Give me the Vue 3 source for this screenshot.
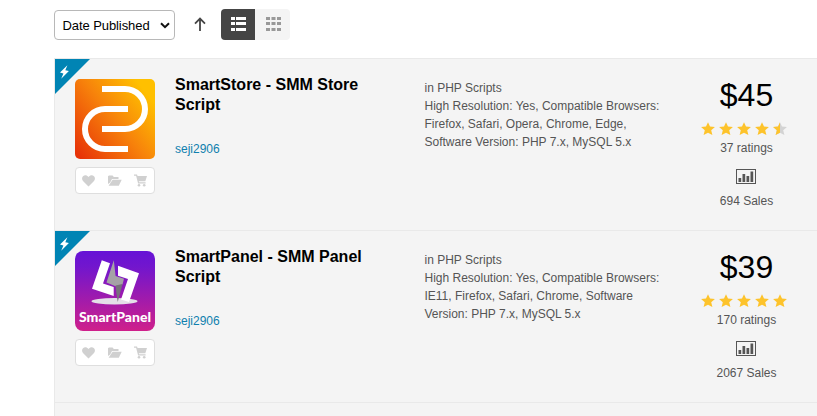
<script setup>
const items = [
  {
    logo: 'store',
    title: ['SmartStore - SMM Store', 'Script'],
    author: 'seji2906',
    meta: ['in PHP Scripts', 'High Resolution: Yes, Compatible Browsers:', 'Firefox, Safari, Opera, Chrome, Edge,', 'Software Version: PHP 7.x, MySQL 5.x'],
    price: '$45',
    stars: [1, 1, 1, 1, 0.5],
    ratings: '37 ratings',
    sales: '694 Sales',
  },
  {
    logo: 'panel',
    title: ['SmartPanel - SMM Panel', 'Script'],
    author: 'seji2906',
    meta: ['in PHP Scripts', 'High Resolution: Yes, Compatible Browsers:', 'IE11, Firefox, Safari, Chrome, Software', 'Version: PHP 7.x, MySQL 5.x'],
    price: '$39',
    stars: [1, 1, 1, 1, 1],
    ratings: '170 ratings',
    sales: '2067 Sales',
  },
]
const starPath = 'M7 0.2L9 4.6L13.9 5L10.2 8.3L11.4 13.1L7 10.7L2.6 13.1L3.8 8.3L0.1 5L5 4.6Z'
</script>

<template>
  <main class="page">
    <header class="toolbar">
      <button class="select">
        <span>Date Published</span>
        <svg width="10" height="7" viewBox="0 0 10 7"><path d="M1 1.2L5 5.2L9 1.2" fill="none" stroke="#111" stroke-width="2" /></svg>
      </button>
      <button class="sort" aria-label="Sort direction">
        <svg width="12" height="15" viewBox="0 0 12 15"><path d="M6 14V1.8M1 6.6L6 1.6L11 6.6" fill="none" stroke="#454545" stroke-width="1.8" /></svg>
      </button>
      <div class="views">
        <button class="view active" aria-label="List view">
          <svg width="15" height="14" viewBox="0 0 15 14" fill="#fff">
            <path d="M0 0h4v3H0zM5 0H15v3H5zM0 5h4v3H0zM5 5H15v3H5zM0 11h4v3H0zM5 11H15v3H5z" />
          </svg>
        </button>
        <button class="view" aria-label="Grid view">
          <svg width="15" height="14" viewBox="0 0 15 14" fill="#999">
            <path d="M0 0h4v3H0zM5.5 0h4v3h-4zM11 0h4v3h-4zM0 5h4v3H0zM5.5 5h4v3h-4zM11 5h4v3h-4zM0 11h4v3H0zM5.5 11h4v3h-4zM11 11h4v3h-4z" />
          </svg>
        </button>
      </div>
    </header>

    <ul class="list">
      <li v-for="item in items" :key="item.logo" class="row">
        <svg class="ribbon" width="35" height="35" viewBox="0 0 35 35">
          <path d="M0 0H35L0 35Z" fill="#0084b4" />
          <path d="M12.4 6.2L5 13.5L8.4 14.4L6.2 19.8L13.9 12L10.3 11.2Z" fill="#fff" />
        </svg>

        <div class="media">
          <svg v-if="item.logo === 'store'" class="thumb" width="80" height="80" viewBox="0 0 80 80">
            <defs>
              <linearGradient id="storeFill" x1="0" y1="0.9" x2="1" y2="0.1">
                <stop offset="0" stop-color="#e73308" />
                <stop offset="0.5" stop-color="#f7830b" />
                <stop offset="0.9" stop-color="#ffc000" />
              </linearGradient>
            </defs>
            <rect width="80" height="80" rx="5" fill="url(#storeFill)" />
            <path d="M27 10H50A20 20 0 0 1 50 50H27M53 30H30A20 20 0 0 0 30 70H53" fill="none" stroke="#fff" stroke-width="6" />
          </svg>
          <svg v-else class="thumb" width="80" height="80" viewBox="0 0 80 80">
            <defs>
              <linearGradient id="panelFill" x1="0" y1="0" x2="0" y2="1">
                <stop offset="0" stop-color="#6612d6" />
                <stop offset="0.2" stop-color="#7216cd" />
                <stop offset="1" stop-color="#cf208b" />
              </linearGradient>
            </defs>
            <rect width="80" height="80" rx="8" fill="url(#panelFill)" />
            <ellipse cx="39.5" cy="50.3" rx="23" ry="3.2" fill="#e4dfe8" />
            <path d="M26.8 9.2L35 12.2L28 32.6L38.7 36V45L17 37.8Z" fill="#fff" />
            <path d="M43 14.8L64 22.2L54 51L46 48.5L53 28L43 24.7Z" fill="#fff" />
            <path d="M38.8 9.2L40.6 25L49 27.8L47.5 33.5L40.5 35.2L31.5 31.5Z" fill="#a5a2a6" />
            <path d="M40.5 34.4L47.5 33L42.7 51L41.4 42Z" fill="#77717a" />
            <text x="40" y="70.8" text-anchor="middle" textLength="72" class="brand">SmartPanel</text>
          </svg>

          <div class="actions">
            <svg width="13" height="12" viewBox="0 0 13 12"><path d="M6.5 11.5L1 6C-0.3 4.5 -0.2 2.4 1 1.2C2.6 -0.3 4.9 0 6.5 2C8.1 0 10.4 -0.3 12 1.2C13.2 2.4 13.3 4.5 12 6Z" /></svg>
            <svg width="14" height="12" viewBox="0 0 14 12"><path d="M0 9V1.2L1 0.5H4.6L5.8 2H10.5V4H4L2.2 7.5Z" /><path d="M4.6 4.8H13.7L10.8 10.8H0.6Z" /></svg>
            <svg width="14" height="13" viewBox="0 0 14 13"><path d="M0 0.5H3L3.6 2H13L11.3 7.2H4.8L5.1 8.3H11.6V9.6H4.1L2.1 1.8H0Z" /><circle cx="5" cy="11.3" r="1.3" /><circle cx="10.2" cy="11.3" r="1.3" /></svg>
          </div>
        </div>

        <div class="info">
          <h3><span v-for="line in item.title" :key="line">{{ line }}</span></h3>
          <a class="author">{{ item.author }}</a>
        </div>

        <div class="meta">
          <span v-for="line in item.meta" :key="line">{{ line }}</span>
        </div>

        <div class="stats">
          <div class="price">{{ item.price }}</div>
          <div class="stars">
            <svg v-for="(fill, i) in item.stars" :key="i" width="14" height="14" viewBox="0 0 14 14">
              <path :d="starPath" :fill="fill === 1 ? '#fdc32b' : '#d3d3d3'" />
              <path v-if="fill < 1" d="M7 0.2V10.7L2.6 13.1L3.8 8.3L0.1 5L5 4.6Z" fill="#fdc32b" />
            </svg>
          </div>
          <div class="ratings">{{ item.ratings }}</div>
          <svg class="chart" width="20" height="15" viewBox="0 0 20 15">
            <rect x="0.5" y="0.5" width="19" height="14" fill="none" stroke="#555" />
            <path d="M2.5 9h2.7v4H2.5zM6.5 5h2.7v8H6.5zM10.5 7h2.7v6h-2.7zM14.5 2.5h2.7V13h-2.7z" fill="#555" />
          </svg>
          <div class="sales">{{ item.sales }}</div>
        </div>
      </li>
      <li class="row"></li>
    </ul>
  </main>
</template>

<style>
body { margin: 0; overflow: hidden; background: #fff; }
</style>

<style scoped>
.page {
  box-sizing: border-box;
  height: 416px;
  padding: 9px 0 0 54px;
  overflow: hidden;
  font: 12px/18px "Liberation Sans", Arial, sans-serif;
  color: #555;
}
button { margin: 0; padding: 0; border: 0; background: none; font: inherit; display: flex; align-items: center; }
svg { display: block; flex: none; }
.toolbar { display: flex; height: 31px; margin-bottom: 18px; }
.select {
  box-sizing: border-box;
  width: 121px;
  height: 30px;
  margin-top: 1px;
  padding: 1px 4px 0 7.5px;
  justify-content: space-between;
  border: 1px solid #b8b8b8;
  border-radius: 4px;
  background: #fff;
  color: #000;
  font-size: 13px;
  letter-spacing: -0.08px;
}
.sort { margin: 0 15px 0 19px; }
.views { display: flex; border-radius: 4px; overflow: hidden; }
.view { box-sizing: border-box; width: 35px; padding: 0 0 1px 11px; background: #f4f4f4; }
.view.active { width: 34px; padding-left: 10px; background: #454545; }
.list { margin: 0; padding: 0; list-style: none; border: solid #e9e9e9; border-width: 1px 0 0 1px; background: #f4f4f4; }
.row { box-sizing: border-box; position: relative; display: flex; height: 172px; padding: 20px 0 0 20px; border-bottom: 1px solid #e9e9e9; }
.ribbon { position: absolute; left: 0; top: 0; }
.media { width: 80px; margin-right: 20px; }
.brand { font: 900 14px Lato, sans-serif; fill: #fff; }
.actions {
  box-sizing: border-box;
  height: 27px;
  margin-top: 8px;
  padding: 0 6px;
  display: flex;
  align-items: center;
  justify-content: space-between;
  border: 1px solid #dedede;
  border-radius: 4px;
  background: #fff;
  fill: #d0d0d0;
}
.info { width: 249.5px; margin-top: -4px; }
h3 { margin: 0; font-size: 16px; line-height: 20px; color: #000; }
h3 span, .meta span { display: block; white-space: nowrap; }
.author { display: block; margin-top: 25px; color: #0f80ae; }
.meta { width: 265px; }
.stats { width: 114px; display: flex; flex-direction: column; align-items: center; }
.price { font-size: 32px; line-height: 32px; color: #000; }
.stars { display: flex; gap: 4px; margin: 11px 5px 0 0; }
.ratings { margin-top: 3px; }
.chart { margin: 12px 1px 0 0; }
.sales { margin-top: 8px; }
</style>
